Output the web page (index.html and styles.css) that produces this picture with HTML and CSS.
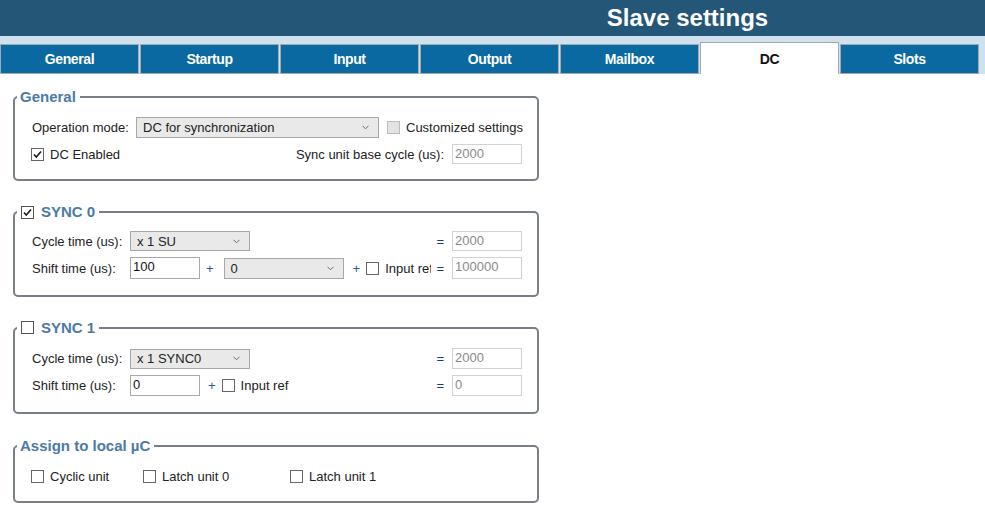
FILE: index.html
```html
<!DOCTYPE html>
<html lang="en">
<head>
<meta charset="utf-8">
<title>Slave settings</title>
<link rel="stylesheet" href="styles.css">
</head>
<body>
<header class="topbar"><h1 class="title">Slave settings</h1></header>
<nav class="tabs">
  <div class="tab">General</div>
  <div class="tab">Startup</div>
  <div class="tab">Input</div>
  <div class="tab">Output</div>
  <div class="tab">Mailbox</div>
  <div class="tab active">DC</div>
  <div class="tab">Slots</div>
</nav>
<main class="content">
  <fieldset class="group g1">
    <legend class="legend">General</legend>
    <div class="gbody b1">
      <div class="row h21">
        <span class="label w104">Operation mode:</span>
        <div class="select w243"><span class="sel-text">DC for synchronization</span><svg class="chev" width="7" height="5" viewBox="0 0 7 5"><polyline points="0.5,0.8 3.5,3.8 6.5,0.8" fill="none" stroke="#6a6a6a" stroke-width="1"/></svg></div>
        <span class="check disabled ml8"></span>
        <span class="ctext">Customized settings</span>
      </div>
      <div class="row h20 mt6">
        <span class="check checked nudge"><svg width="11" height="11" viewBox="0 0 11 11"><path d="M2 5.5 L4.3 8 L9 2.5" fill="none" stroke="#1a1a1a" stroke-width="1.6"/></svg></span>
        <span class="ctext">DC Enabled</span>
        <span class="label auto">Sync unit base cycle (us):</span>
        <span class="input disabled w70 h20 ml8">2000</span>
      </div>
    </div>
  </fieldset>

  <fieldset class="group g2">
    <legend class="legend"><span class="check checked lcheck"><svg width="11" height="11" viewBox="0 0 11 11"><path d="M2 5.5 L4.3 8 L9 2.5" fill="none" stroke="#1a1a1a" stroke-width="1.6"/></svg></span>SYNC 0</legend>
    <div class="gbody b2">
      <div class="row h20">
        <span class="label w98">Cycle time (us):</span>
        <div class="select w120"><span class="sel-text">x 1 SU</span><svg class="chev" width="7" height="5" viewBox="0 0 7 5"><polyline points="0.5,0.8 3.5,3.8 6.5,0.8" fill="none" stroke="#6a6a6a" stroke-width="1"/></svg></div>
        <span class="op eq auto">=</span>
        <span class="input disabled w70 h20 ml8">2000</span>
      </div>
      <div class="row h22 mt6">
        <span class="label w98">Shift time (us):</span>
        <span class="input w70 h22">100</span>
        <span class="op plus ml6">+</span>
        <div class="select w120 h21 ml10"><span class="sel-text">0</span><svg class="chev" width="7" height="5" viewBox="0 0 7 5"><polyline points="0.5,0.8 3.5,3.8 6.5,0.8" fill="none" stroke="#6a6a6a" stroke-width="1"/></svg></div>
        <span class="op plus ml9">+</span>
        <span class="check ml6"></span>
        <span class="ctext clip">Input ref</span>
        <span class="op eq auto">=</span>
        <span class="input disabled w70 h22 ml8">100000</span>
      </div>
    </div>
  </fieldset>

  <fieldset class="group g3">
    <legend class="legend"><span class="check lcheck"></span>SYNC 1</legend>
    <div class="gbody b3">
      <div class="row h21">
        <span class="label w98">Cycle time (us):</span>
        <div class="select w120"><span class="sel-text">x 1 SYNC0</span><svg class="chev" width="7" height="5" viewBox="0 0 7 5"><polyline points="0.5,0.8 3.5,3.8 6.5,0.8" fill="none" stroke="#6a6a6a" stroke-width="1"/></svg></div>
        <span class="op eq auto">=</span>
        <span class="input disabled w70 h21 ml8">2000</span>
      </div>
      <div class="row h21 mt6">
        <span class="label w98">Shift time (us):</span>
        <span class="input w70 h21">0</span>
        <span class="op plus ml8">+</span>
        <span class="check ml6"></span>
        <span class="ctext">Input ref</span>
        <span class="op eq auto">=</span>
        <span class="input disabled w70 h21 ml8">0</span>
      </div>
    </div>
  </fieldset>

  <fieldset class="group g4">
    <legend class="legend">Assign to local µC</legend>
    <div class="gbody b4">
      <div class="row h16 checks">
        <span class="opt w112"><span class="check"></span><span class="ctext">Cyclic unit</span></span>
        <span class="opt w147"><span class="check"></span><span class="ctext">Latch unit 0</span></span>
        <span class="opt"><span class="check"></span><span class="ctext">Latch unit 1</span></span>
      </div>
    </div>
  </fieldset>
</main>
</body>
</html>
```

FILE: styles.css
```css
* { box-sizing: border-box; }

body {
  margin: 0;
  font-family: "Liberation Sans", Arial, sans-serif;
  font-size: 13px;
  color: #222;
  background: #fff;
}

.topbar {
  height: 36px;
  background: #235677;
  padding-left: 390px;
}

.title {
  margin: 0;
  text-align: center;
  color: #fff;
  font-size: 24px;
  font-weight: bold;
  line-height: 36px;
}

.tabs {
  display: flex;
  align-items: flex-end;
  height: 38px;
  background: #cfe0ee;
}

.tab {
  width: 139px;
  height: 30px;
  margin-right: 1px;
  border: 1px solid #a3a9ae;
  background: #0a69a0;
  color: #fff;
  font-size: 14px;
  font-weight: bold;
  letter-spacing: -0.4px;
  display: flex;
  align-items: center;
  justify-content: center;
}

.tab.active {
  height: 32px;
  background: #fff;
  color: #111;
  border-bottom: 0;
}

.content {
  padding: 15px 0 0 13px;
}

.group {
  width: 526px;
  margin: 0;
  padding: 0;
  min-width: 0;
  border: 2px solid #787f88;
  border-radius: 5px;
}

.g2 { margin-top: 23px; }
.g3 { margin-top: 23px; }
.g4 { margin-top: 24px; }

.legend {
  margin-left: 2px;
  padding: 0 4px 0 3px;
  font-size: 15px;
  font-weight: bold;
  line-height: 16px;
  color: #4b7ba4;
}

.gbody { padding: 12px 15px 14px 17px; }
.b1 { padding-bottom: 15px; }
.b2 { padding-top: 11px; padding-bottom: 16px; }
.b3 { padding-top: 12px; padding-bottom: 16px; }
.b4 { padding-top: 14px; padding-bottom: 17px; }

.row {
  display: flex;
  align-items: center;
  white-space: nowrap;
}

.h16 { height: 16px; }
.h20 { height: 20px; }
.h21 { height: 21px; }
.h22 { height: 22px; }
.mt6 { margin-top: 6px; }
.mt7 { margin-top: 7px; }
.ml6 { margin-left: 6px; }
.ml7 { margin-left: 7px; }
.ml8 { margin-left: 8px; }
.ml9 { margin-left: 9px; }
.ml10 { margin-left: 10px; }
.auto { margin-left: auto; }

.w70 { width: 70px; }
.w98 { width: 98px; flex: none; }
.w104 { width: 104px; flex: none; }
.w112 { width: 112px; flex: none; }
.w120 { width: 120px; }
.w147 { width: 147px; flex: none; }
.w243 { width: 243px; }

.label { color: #222; }

.select {
  display: flex;
  align-items: center;
  height: 20px;
  flex: none;
  background: #e9e9e9;
  border: 1px solid #a7a7a7;
  padding-left: 6px;
  color: #222;
}
.select.h21 { height: 21px; }
.w243.select { height: 21px; }

.sel-text { flex: 1; }
.chev { margin-right: 9px; flex: none; }

.input {
  display: block;
  flex: none;
  border: 1px solid #a9a9a9;
  background: #fff;
  padding: 1px 2px;
  line-height: 16px;
  color: #111;
}
.input.h20 { height: 20px; }
.input.h21 { height: 21px; }
.input.h22 { height: 22px; }

.input.disabled {
  border-color: #d2d2d2;
  color: #8a8a8a;
}

.check {
  display: inline-flex;
  align-items: center;
  justify-content: center;
  flex: none;
  width: 13px;
  height: 13px;
  border: 1px solid #666;
  background: #fff;
  vertical-align: -1px;
}

.check.disabled {
  background: #e3e3e3;
  border-color: #bcbcbc;
}

.nudge { margin-left: -1px; }

.lcheck {
  margin-left: 1px;
  margin-right: 7px;
  border-color: #555;
}

.ctext { margin-left: 6px; color: #222; }

.clip {
  width: 46px;
  overflow: hidden;
  flex: none;
}

.op { flex: none; }
.eq { color: #1d3c6b; }
.plus { color: #275b91; }

.checks { margin-left: -1px; }
.opt { display: flex; align-items: center; }
```
